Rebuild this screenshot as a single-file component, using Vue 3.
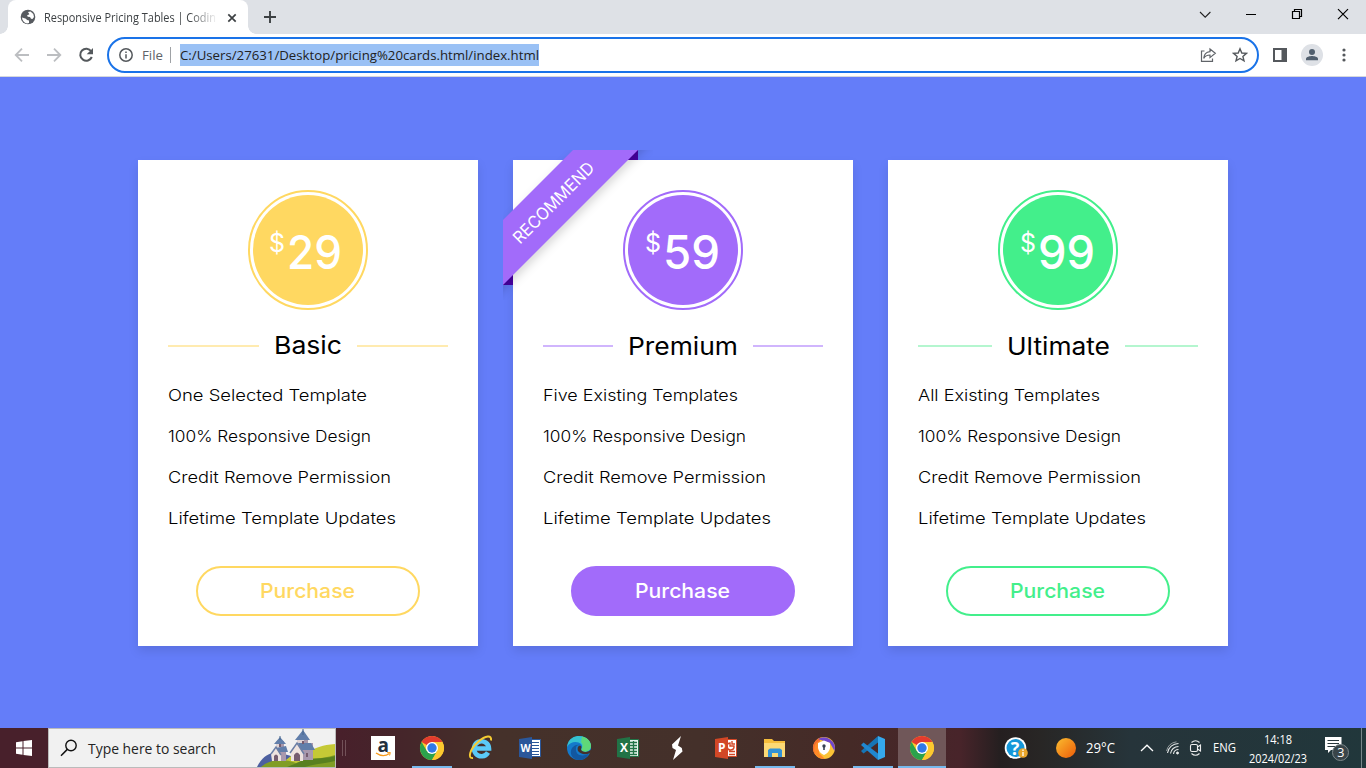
<script setup>
import { h } from 'vue'

// One line of text fitted to a fixed width, drawn on a given baseline.
const FitText = (props) =>
  h('svg', { width: props.w, height: props.h, class: 'fit' }, [
    h('text', { x: 0, y: props.base, textLength: props.w, lengthAdjust: 'spacingAndGlyphs', fill: 'currentColor' }, props.text),
  ])
FitText.props = ['w', 'h', 'base', 'text']

const shared = [
  { text: '100% Responsive Design', w: 203 },
  { text: 'Credit Remove Permission', w: 223 },
  { text: 'Lifetime Template Updates', w: 228 },
]
const plans = [
  { id: 'basic', price: '29', pw: 55, name: 'Basic', nw: 68, base: 28, features: [{ text: 'One Selected Template', w: 199 }, ...shared] },
  { id: 'premium', price: '59', pw: 57, name: 'Premium', nw: 110, base: 29, ribbon: true, features: [{ text: 'Five Existing Templates', w: 195 }, ...shared] },
  { id: 'ultimate', price: '99', pw: 57, name: 'Ultimate', nw: 103, base: 29, features: [{ text: 'All Existing Templates', w: 182 }, ...shared] },
]
const apps = ['amazon', 'chrome', 'ie', 'word', 'edge', 'excel', 'stream', 'ppt', 'folder', 'avast', 'code', 'chrome']
const running = [1, 8, 10, 11]
</script>

<template>
  <div class="screen">
    <header class="tabs">
      <div class="tab">
        <svg class="globe" width="16" height="16" viewBox="0 0 16 16">
          <circle cx="8" cy="8" r="7.3" fill="#565a5f" />
          <path d="M2 8.5 6 9.7 7 11 9 11.5 9 14 7 14.4C4 13.8 2 11.5 2 8.5ZM8 3 10.5 2.4 13.3 5 14 8 12.5 10 11 9.7 10 8 7.8 7.8 7 6.5 9.4 5.3Z" fill="#fff" />
        </svg>
        <FitText class="tab-title" :w="172" :h="20" :base="14.5" text="Responsive Pricing Tables | Codin" />
        <svg class="tab-close" width="10" height="10" viewBox="0 0 10 10"><path d="M1.3 1.3 8.7 8.7M8.7 1.3 1.3 8.7" stroke="#3c4043" stroke-width="1.7" /></svg>
      </div>
      <svg class="new-tab" width="14" height="14" viewBox="0 0 14 14"><path d="M7 1V13M1 7H13" stroke="#3c4043" stroke-width="1.9" /></svg>
      <div class="window-controls">
        <svg width="46" height="28" viewBox="0 0 46 28"><path d="m18 12 5.2 5.2 5.2-5.2" fill="none" stroke="#222" stroke-width="1.1" /></svg>
        <svg width="46" height="28" viewBox="0 0 46 28"><path d="M18 14.5H28" stroke="#000" /></svg>
        <svg width="46" height="28" viewBox="0 0 46 28"><path d="M18.500 11.500h7v7h-7zM20.500 11.500v-2h7v7h-2" fill="none" stroke="#000" stroke-width="1.2" /></svg>
        <svg width="46" height="28" viewBox="0 0 46 28"><path d="m18 9.200 10 10m0-10-10 10" stroke="#000" stroke-width="1.2" /></svg>
      </div>
    </header>

    <div class="toolbar">
      <div class="nav">
        <svg width="32" height="32" viewBox="0 0 32 32"><path d="M23 16H10.500M16 9.700 9.700 16 16 22.300" fill="none" stroke="#bcbec1" stroke-width="1.8" /></svg>
        <svg width="32" height="32" viewBox="0 0 32 32"><path d="M9 16H21.500M16 9.700 22.300 16 16 22.300" fill="none" stroke="#bcbec1" stroke-width="1.8" /></svg>
        <svg width="32" height="32" viewBox="0 0 32 32"><path d="M21.200 12.300A6 6 0 1 0 21.800 18" fill="none" stroke="#54585c" stroke-width="2" /><path d="M23 9v6.300h-6.300z" fill="#54585c" /></svg>
      </div>
      <div class="omnibox">
        <svg class="info" width="14" height="14" viewBox="0 0 14 14"><circle cx="7" cy="7" r="6.200" fill="none" stroke="#54585c" stroke-width="1.500" /><path d="M7 6.200V10.500M7 3.400V5" stroke="#54585c" stroke-width="1.500" /></svg>
        <FitText class="scheme" :w="21" :h="22" :base="16" text="File" />
        <i class="divider"></i>
        <div class="url"><FitText :w="359" :h="22" :base="16" text="C:/Users/27631/Desktop/pricing%20cards.html/index.html" /></div>
        <svg class="share" width="17" height="16" viewBox="0 0 17 16"><path d="M4.500 4H1.500V14.300H12.500V11.500" fill="none" stroke="#606469" stroke-width="1.200" /><path d="M10 2 15.300 6.300 10 10.600V8C7 8 5 9 3.700 11.400 4 7.400 6.300 5 10 4.600Z" fill="none" stroke="#606469" stroke-width="1.200" /></svg>
        <svg class="star" width="16" height="16" viewBox="0 0 16 16"><path d="m8 1.800 1.800 4.200 4.600.4-3.500 3 1.100 4.500L8 11.500l-4 2.400 1.100-4.500-3.500-3L6.200 6z" fill="none" stroke="#54585c" stroke-width="1.400" /></svg>
      </div>
      <div class="tools">
        <svg width="14" height="14" viewBox="0 0 14 14"><path d="M0 0H14V14H0ZM2 2V12H8.500V2Z" fill="#54585c" fill-rule="evenodd" /></svg>
        <svg width="22" height="22" viewBox="0 0 22 22"><circle cx="11" cy="11" r="11" fill="#dee1e6" /><circle cx="11" cy="8" r="3" fill="#52606f" /><path d="M5 16.300V14.800C5 12.800 9 12 11 12S17 12.800 17 14.800V16.300Z" fill="#52606f" /></svg>
        <svg width="4" height="14" viewBox="0 0 4 14"><g fill="#54585c"><circle cx="2" cy="2" r="1.600" /><circle cx="2" cy="7" r="1.600" /><circle cx="2" cy="12" r="1.600" /></g></svg>
      </div>
    </div>

    <main class="page">
      <article v-for="p in plans" :key="p.id" class="card" :class="p.id">
        <svg v-if="p.ribbon" class="ribbon" width="150" height="150" viewBox="0 0 150 150">
          <path d="M125 0H135V10H125ZM0 125H10V135H0Z" fill="#4801a3" />
          <path class="band" d="M-20 90 70 0 90-20H155L-20 155Z" fill="#a26bfa" />
          <text transform="translate(50.500 52) rotate(-45)" x="-54" y="6.500" textLength="107" lengthAdjust="spacingAndGlyphs" fill="#fff">RECOMMEND</text>
        </svg>
        <div class="price">
          <div class="disc">
            <FitText class="currency" :w="16" :h="40" :base="22" text="$" />
            <FitText class="amount" :w="p.pw" :h="50" :base="39" :text="p.price" />
          </div>
        </div>
        <div class="name">
          <i></i>
          <FitText :w="p.nw" :h="40" :base="p.base" :text="p.name" />
          <i></i>
        </div>
        <ul>
          <li v-for="f in p.features" :key="f.text"><FitText :w="f.w" :h="41" :base="26" :text="f.text" /></li>
        </ul>
        <button><FitText :w="95" :h="46" :base="30" text="Purchase" /></button>
      </article>
    </main>

    <footer class="taskbar">
      <div class="start">
        <svg width="16" height="16" viewBox="0 0 16 16"><path d="M0 2.300 6.500 1.300V7.500H0ZM7.500 1.100 16 0V7.500H7.500ZM0 8.500H6.500V14.700L0 13.700ZM7.500 8.500H16V16L7.500 14.900Z" fill="#fff" /></svg>
      </div>
      <div class="search">
        <svg class="lens" width="18" height="18" viewBox="0 0 18 18"><circle cx="11" cy="6.500" r="5.200" fill="none" stroke="#111" stroke-width="1.400" /><path d="M7.300 10.400 1 16.700" stroke="#111" stroke-width="1.500" /></svg>
        <FitText :w="128" :h="38" :base="25" text="Type here to search" />
        <svg class="castle" width="78" height="38" viewBox="0 0 78 38">
          <path d="M0 38C5 28 11 24 20 23L34 27 40 38Z" fill="#4d60a0" />
          <path d="M34 27C50 27 53 17 78 15V38H20Z" fill="#c5c936" />
          <path d="M4 38C14 29 28 30 39 34 52 28 63 31 78 26V38Z" fill="#809d25" />
          <path d="M40 34C53 27 64 31 78 27V32C66 35 56 35 48 38H30Z" fill="#58801f" />
          <path d="M15 25 19 20H29V32H15ZM34 23 40 14H56V31H34Z" fill="#a999ae" />
          <path d="M19 12H27V21H19ZM40 9H51V20H40Z" fill="#dfd3d4" />
          <path d="M24 12H27V18H24ZM47 9H51V16H47Z" fill="#a898ab" />
          <path d="M23 8 29 15H17ZM46 1 53 11H38ZM19 19 29 17 31 23H21ZM41 14H54L58 21H44Z" fill="#617eaa" />
          <path d="M14 25 19 19 24 26V32H15ZM34 23 40 14 46 24V32H34Z" fill="#eee3df" />
          <path d="M14 25 19 18 24 26M33 24 40 14 47 25" fill="none" stroke="#6c7fa5" stroke-width="1.500" />
          <path d="M17 32V27Q19 24 21 27V32ZM37 32V26Q40 21 43 26V32ZM49 24H51V28H49ZM45 12H47V15H45ZM22 15H24V18H22Z" fill="#765d70" />
          <path d="M46 0V6M23 7V11" stroke="#46678e" />
        </svg>
      </div>
      <i class="grip"></i>
      <div class="apps">
        <div v-for="(a, i) in apps" :key="i" class="app" :class="{ running: running.includes(i), active: i === 11 }">
          <svg class="icon" width="24" height="24" viewBox="0 0 24 24">
            <template v-if="a === 'amazon'">
              <path d="M0 0H24V24H0Z" fill="#fff" />
              <text x="6.500" y="15.500" class="mark" font-size="19" fill="#232f3e">a</text>
              <path d="M5 17Q12 22 18.500 17.500" fill="none" stroke="#f79a1c" stroke-width="1.300" /><path d="M16 16.700 19.300 16.500 18.600 19.500" fill="none" stroke="#f79a1c" />
            </template>
            <template v-else-if="a === 'chrome'">
              <circle cx="12" cy="12" r="12" fill="#fcc82f" />
              <path d="M12 12 1.600 6A12 12 0 0 1 22.400 6H12Z" fill="#e33b2e" />
              <path d="M1.600 6A12 12 0 0 0 12 24L17.200 15 12 12 6.800 15Z" fill="#2ba24c" />
              <path d="M22.400 6A12 12 0 0 1 12 24L17.200 15V6Z" fill="#fcc82f" />
              <circle cx="12" cy="12" r="6" fill="#fff" /><circle cx="12" cy="12" r="4.700" fill="#3079e8" />
            </template>
            <template v-else-if="a === 'ie'">
              <path d="M19 16.500A7.500 7.500 0 1 1 20 12.500H7" fill="none" stroke="#5bcaf7" stroke-width="4.600" />
              <path d="M4 22C-2 23 1 13 9 6S23-1 22 4.500" fill="none" stroke="#f6cc32" stroke-width="2" />
            </template>
            <template v-else-if="a === 'word' || a === 'excel' || a === 'ppt'">
              <path d="M11 3.500H22.500V20.500H11Z" :fill="a === 'excel' ? '#e9f5ee' : '#fff'" :stroke="a === 'word' ? '#2b579a' : a === 'excel' ? '#217346' : '#d24726'" />
              <path v-if="a === 'word'" d="M14 6.500H21M14 9.500H21M14 12.500H21M14 15.500H21M14 18.500H21" stroke="#2b579a" />
              <path v-else-if="a === 'excel'" d="M14 6.500H21M14 9.500H21M14 12.500H21M14 15.500H21M14 18.500H21M17.500 5V19" stroke="#217346" stroke-width="1.300" />
              <path v-else d="M15 15.500H21M15 18.500H21M16 7A3.500 3.500 0 1 0 20 10H16ZM18 5V8H21" stroke="#d24726" fill="none" stroke-width="1.400" />
              <path d="M1 3 14 1V23L1 21Z" :fill="a === 'word' ? '#2b579a' : a === 'excel' ? '#217346' : '#d24726'" />
              <text :x="a === 'word' ? 2.500 : 4" y="16" class="mark" :font-size="a === 'word' ? 10.500 : 12" fill="#fff">{{ a === 'word' ? 'W' : a === 'excel' ? 'X' : 'P' }}</text>
            </template>
            <template v-else-if="a === 'edge'">
              <circle cx="12" cy="12" r="12" fill="#1479cb" />
              <path d="M0 11C1 2 8 0 12 0 20 0 24 6 24 10 24 15 18 17 15 15 13 13 17 12 14 8 11 5 3 5 0 11Z" fill="#35c1d0" />
              <path d="M15 .5C21 2 24 6 24 10 24 15 18 17 15 15 13 13 18 10 14 6Z" fill="#5fd878" />
              <path d="M9 12C8 20 16 21 22 17.500 20 22 16 24 12 24 5 24 2 17 5 12 7 9 11 8 13 9 10 9 9 10 9 12Z" fill="#1257a0" />
              <path d="M15 15C13 13 15 12 14 10 11 9 10 12 11 15 13 18 18 19 22 17.500L24 17 24.500 13.500Q20 17.500 15 15Z" fill="#45312a" />
            </template>
            <path v-else-if="a === 'stream'" d="M16 0 7 8.500 7.500 12 11 14 8 24 17.500 15.500 16.800 12 13 9.500Z" fill="#fff" />
            <template v-else-if="a === 'folder'">
              <path d="M1 3H9L11 5H22V21H1Z" fill="#f5bd3b" /><path d="M1 7H22V21H1Z" fill="#fcd975" />
              <path d="M5 21V14L7 12.500H17L19 14V21H15V17H9V21Z" fill="#3392d5" />
            </template>
            <template v-else-if="a === 'avast'">
              <circle cx="12" cy="12" r="11" fill="#fbc336" />
              <path d="M3 18.500A11 11 0 0 1 9 1.400L5 12Z" fill="#f36a32" /><path d="M6 3A11 11 0 0 1 22.500 15L18 7Z" fill="#7047cd" /><path d="M3 18C1 11 3 6 8 5L7 17 13 23Q6 23 3 18Z" fill="#ff8a28" />
              <path d="M6 7 12 4.500 18 7V12Q17 17 12 19 7 17 6 12Z" fill="#fff" /><circle cx="12" cy="10" r="1.700" fill="#384152" /><path d="M12 10V14" stroke="#384152" stroke-width="1.600" />
            </template>
            <template v-else>
              <path d="M17 0V6.500L2.500 17.500 0 15Z" fill="#1675b6" /><path d="M17 24V17.500L2.500 6.500 0 9Z" fill="#2087d0" /><path d="M17 0 24 3V21L17 24 Z" fill="#35a9ed" />
            </template>
          </svg>
        </div>
      </div>
      <div class="tray">
        <div class="cell help">
          <svg width="24" height="24" viewBox="0 0 24 24"><circle cx="11.500" cy="12" r="10.800" fill="#fff" /><circle cx="11.500" cy="12" r="9" fill="#1597d9" /><text x="6.800" y="18.500" class="mark" font-size="18" fill="#fff">?</text><circle cx="19" cy="17" r="4.800" fill="#eaa62c" /><path d="M19 16V20M19 13.500V15" stroke="#fff" stroke-width="1.300" /></svg>
        </div>
        <div class="cell weather">
          <svg width="20" height="20" viewBox="0 0 20 20"><defs><linearGradient id="sun" x2="1" y2="1"><stop stop-color="#fabd30" /><stop offset="1" stop-color="#ed5b08" /></linearGradient></defs><circle cx="10" cy="10" r="10" fill="url(#sun)" /></svg>
          <FitText :w="29" :h="40" :base="25" text="29°C" />
        </div>
        <div class="cell up"><svg width="14" height="8" viewBox="0 0 14 8"><path d="m1 7 6-5.800L13 7" fill="none" stroke="#fff" stroke-width="1.300" /></svg></div>
        <div class="cell wifi"><svg width="14" height="14" viewBox="0 0 14 14" fill="none" stroke="#e6e9e9"><path d="M1.500 12A11 11 0 0 1 12.500 2.500M4.500 12.500A8 8 0 0 1 12.500 5.500M7.500 13A5 5 0 0 1 12.500 8.500" stroke-width="1.100" /><path d="M.5 10A12 12 0 0 1 10.500 .8" stroke="#91999b" /><circle cx="11.500" cy="12" r="1" fill="#fff" /></svg></div>
        <div class="cell meet"><svg width="14" height="18" viewBox="0 0 14 18" fill="none" stroke="#eee" stroke-width="1.100"><rect x="1.500" y="5.500" width="7" height="7" rx="1.500" /><path d="m8.500 8 3-2v6l-3-2M2.500 3.500Q6.500 0 10.500 3.500M2.500 14.500Q6.500 18 10.500 14.500" /></svg></div>
        <div class="cell lang"><FitText :w="23" :h="40" :base="24" text="ENG" /></div>
        <div class="cell clock">
          <FitText :w="28" :h="18" :base="14" text="14:18" />
          <FitText :w="58" :h="18" :base="14.500" text="2024/02/23" />
        </div>
        <div class="cell notes"><svg width="25" height="26" viewBox="0 0 25 26"><path d="M0 2H16.500V15H6L3 18V15H0Z" fill="#fff" /><path d="M2.500 5.500H14M2.500 8.500H14M2.500 11.500H10" stroke="#2a393d" stroke-width="1.200" /><circle cx="15.500" cy="17.500" r="8" fill="#394549" stroke="#7c888b" /><text x="12.200" y="22" font-size="12.500" fill="#fff">3</text></svg></div>
        <i class="desktop"></i>
      </div>
    </footer>
  </div>
</template>

<style>
body { margin: 0; overflow: hidden; }
</style>

<style scoped>
* { box-sizing: border-box; }
.screen { width: 1366px; height: 768px; display: flex; flex-direction: column; font-family: "Open Sans", "Noto Sans", sans-serif; overflow: hidden; }
svg { display: block; flex: none; }
.fit, .icon { overflow: visible; }
.tabs { height: 34px; flex: none; background: #dee1e6; display: flex; padding-left: 8px; }
.tab { width: 240px; height: 34px; background: #fff; border-radius: 8px 8px 0 0; display: flex; align-items: center; padding-left: 12px; position: relative; }
.tab::before, .tab::after { content: ""; position: absolute; bottom: 0; width: 8px; height: 8px; background: radial-gradient(circle at 0 0, #dee1e6 7.500px, #fff 8px); left: -8px; }
.tab::after { left: 240px; background: radial-gradient(circle at 100% 0, #dee1e6 7.500px, #fff 8px); }
.globe { margin-right: 8px; }
.tab-title { font-size: 12px; color: #3c4043; margin-right: 11px; mask-image: linear-gradient(90deg, #000 145px, transparent 174px); }
.tab-close { margin-top: 1px; }
.new-tab { margin: 10px 0 0 15px; }
.window-controls { margin-left: auto; display: flex; }
.toolbar { height: 43px; flex: none; background: #fff; border-bottom: 1px solid #d5d8dd; display: flex; align-items: center; }
.nav { width: 107px; padding-left: 6px; display: flex; }
.omnibox { width: 1152px; height: 36px; border: 2px solid #1a73e8; border-radius: 18px; display: flex; align-items: center; padding: 0 10px; font-size: 13.300px; color: #222; }
.scheme { margin-left: 9px; color: #5f6368; }
.divider { width: 1px; height: 16px; background: #9fa2a6; margin: 0 9px 0 7px; }
.url { background: #9ac1f5; width: 359px; }
.share { margin-left: auto; margin-right: 15px; }
.star { margin-right: -1px; }
.tools { display: flex; align-items: center; padding-left: 14px; gap: 14px; }
.tools svg:last-child { margin-left: 5px; }

.page { height: 651px; flex: none; background: #647df9; display: flex; justify-content: center; gap: 35px; padding-top: 83px; font-family: Inter, sans-serif; }
.card { width: 340px; height: 486px; padding: 30px; background: #fff; box-shadow: 0 5px 10px rgba(0, 0, 0, .1); position: relative; display: flex; flex-direction: column; align-items: center; }
.basic { --c: #ffd861; --line: #ffebb0; }
.premium { --c: #a26bfa; --line: #d0b5fd; }
.ultimate { --c: #43ef8b; --line: #b4f6cf; }
.price { width: 120px; height: 120px; border: 2px solid var(--c); border-radius: 50%; padding: 3px; }
.disc { width: 110px; height: 110px; border-radius: 50%; background: var(--c); color: #fff; display: flex; justify-content: center; padding: 35px 4px 0 0; gap: 2px; font-weight: 500; }
.basic .disc { padding-right: 5px; }
.premium .disc, .ultimate .disc { padding-right: 2px; }
.currency { font-size: 25px; font-weight: 400; }
.amount { font-size: 47px; font-weight: 500; }
.name { width: 280px; height: 40px; margin-top: 16px; display: flex; align-items: center; gap: 15px; font-size: 24.300px; font-weight: 430; color: #000; }
.name i { flex: 1; height: 2px; background: var(--line); }
ul { list-style: none; margin: 9px 0 27px; padding: 0; width: 280px; font-size: 16.500px; font-weight: 300; color: #000; }
li { height: 41px; }
button { width: 224px; height: 50px; border: 2px solid var(--c); border-radius: 25px; background: #fff; color: var(--c); display: flex; justify-content: center; padding: 0 1px 0 0; font: 550 20px Inter, sans-serif; }
.premium button { background: var(--c); color: #fff; }
.ribbon { position: absolute; top: -10px; left: -10px; overflow: hidden; font-size: 17px; font-weight: 400; }
.band { filter: drop-shadow(3.500px 3.500px 5px rgba(0, 0, 0, .15)); }

.taskbar { height: 40px; flex: none; display: flex; background: linear-gradient(90deg, #48202b 0, #48202b 340px, #45252a 400px, #45312a 500px, #44302a 700px, #452a27 850px, #48242a 960px, #251f20 1000px, #282625 1040px, #26343a 1130px, #21373b 1366px); }
.start { width: 48px; display: grid; place-items: center; }
.search { width: 288px; height: 40px; border: 1px solid #bbb; background: #f1f1f1; display: flex; font-size: 15px; color: #242424; }
.lens { margin: 10px 10px 0 11px; }
.castle { margin-left: auto; }
.grip { width: 4px; height: 16px; margin: 12px 13px 0 6px; border: solid #725158; border-width: 0 1px; }
.apps { display: flex; gap: 1px; }
.app { width: 48px; height: 40px; display: grid; place-items: center; position: relative; }
.running::after { content: ""; position: absolute; left: 4px; right: 4px; bottom: 0; height: 2px; background: #76b9ed; }
.active { background: #705759; }
.active::after { left: 0; right: 0; }
.mark { font-family: "Open Sans", sans-serif; font-weight: 700; }
.tray { display: flex; color: #fff; font-size: 12px; margin-left: auto; }
.cell { height: 40px; display: flex; align-items: center; }
.help { width: 52px; }
.weather { width: 84px; gap: 10px; font-size: 14px; }
.up { width: 26px; }
.wifi { width: 23px; }
.meet { width: 24px; }
.lang { width: 29px; font-size: 12px; }
.clock { width: 72px; flex-direction: column; justify-content: center; }
.notes { width: 36px; margin-left: 11px; }
.desktop { width: 1px; height: 40px; background: #77878a; margin-right: 4px; }
</style>
